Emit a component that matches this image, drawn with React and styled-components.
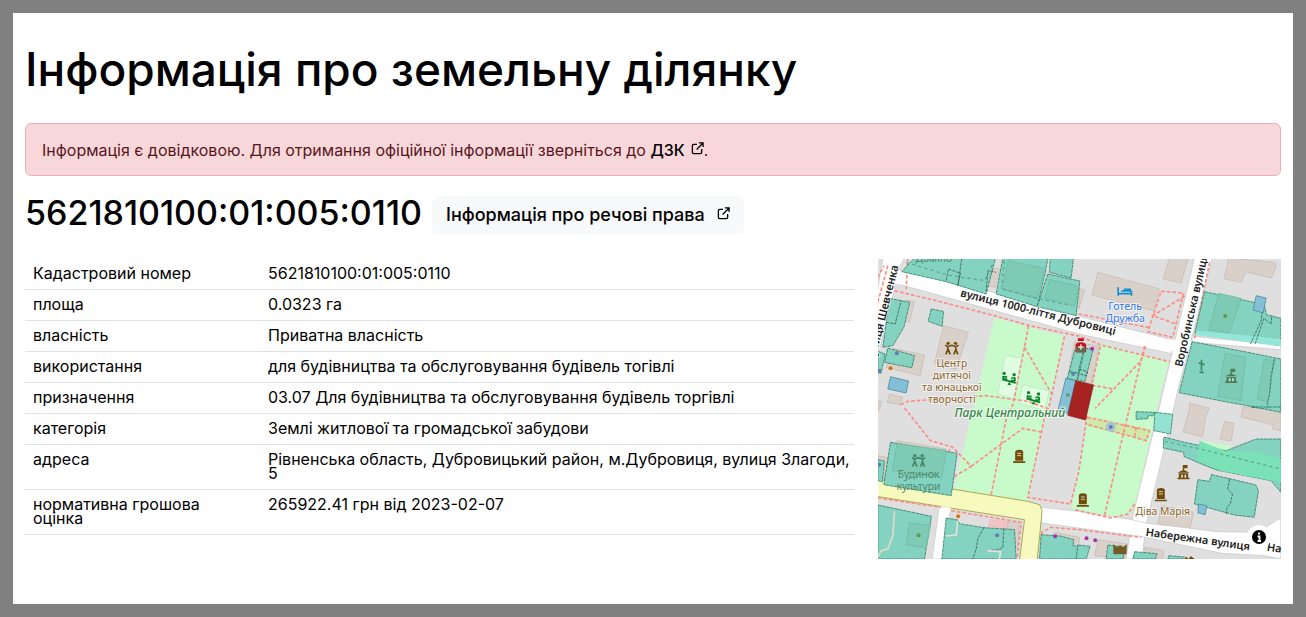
import React from "react";
import styled, { createGlobalStyle } from "styled-components";

const GlobalStyle = createGlobalStyle`
  *, *::before, *::after {
    box-sizing: border-box;
  }

  body {
    margin: 0;
    background: #808080;
    color: #000;
    font-family: Inter, "Liberation Sans", sans-serif;
    font-size: 16px;
    line-height: 24px;
  }
`;

const Page = styled.div`
  display: flex;
  min-height: 100vh;
  padding: 13px;
`;

const Container = styled.main`
  flex: 1;
  min-width: 0;
  padding: 28px 12px;
  background: #fff;
`;

const Title = styled.h1`
  margin: 0 0 26px;
  font-size: 46px;
  font-weight: 500;
  line-height: 56px;
`;

const Alert = styled.div`
  margin-bottom: 16px;
  padding: 15px 16px 13px;
  border: 1px solid #f1aeb5;
  border-radius: 6px;
  background: #f8d7da;
  color: #58151c;
  line-height: 23px;
`;

const AlertLink = styled.a`
  color: #000;
  font-weight: 500;
  text-decoration: none;
`;

const LinkIcon = styled.svg`
  width: 13px;
  height: 13px;
  margin-left: ${(props) => (props.$wide ? "12px" : "6px")};
  vertical-align: 1px;
  fill: none;
  stroke: currentColor;
  stroke-width: 1.4;
`;

const Heading = styled.div`
  display: flex;
  flex-wrap: wrap;
  align-items: flex-end;
  gap: 10px;
  margin-bottom: 25px;
`;

const Number = styled.h2`
  margin: 0;
  font-size: 34px;
  font-weight: 500;
  line-height: 42px;
`;

const RightsLink = styled.a`
  padding: 7px 14px;
  border-radius: 6px;
  background: #f8f9fa;
  color: #000;
  font-size: 18px;
  font-weight: 500;
  text-decoration: none;
`;

const Columns = styled.div`
  display: flex;
  margin: 0 -12px;
`;

const Column = styled.div`
  width: calc(100% * ${(props) => props.$share} / 12);
  padding: 0 12px;
`;

const Table = styled.table`
  width: 100%;
  border-collapse: collapse;
  table-layout: fixed;
  line-height: 14px;
`;

const Label = styled.th`
  width: 235px;
  padding: 7px 8px 9px;
  border-bottom: 1px solid #dee2e6;
  font-weight: 400;
  text-align: left;
  vertical-align: top;
`;

const Value = styled.td`
  padding: 7px 0 9px 8px;
  border-bottom: 1px solid #dee2e6;
  vertical-align: top;
`;

const MapBox = styled.div`
  position: relative;
  height: 300px;
  overflow: hidden;
  background: #dfdfdf;
`;

const MapSvg = styled.svg`
  display: block;
  width: 100%;
  height: 100%;
  font-family: "Noto Sans", sans-serif;

  .building {
    fill: #d9d0c9;
    stroke: #c6b8ad;
    stroke-width: 2;
  }
  .park {
    fill: #c8facc;
  }
  .road {
    fill: #fff;
    stroke: #c4c4c4;
    stroke-width: 2;
  }
  .path {
    fill: none;
    stroke: #fa8d86;
    stroke-width: 5;
    stroke-dasharray: 11 6;
  }
  .parcel {
    fill: #83d3c0;
    stroke: #17694f;
    stroke-width: 2;
    stroke-dasharray: 11 2;
  }
  .line {
    fill: none;
    stroke: #24473d;
    stroke-width: 2;
    stroke-dasharray: 9 3;
  }
  .blue {
    fill: #83bfd6;
    stroke: #397c94;
    stroke-width: 2;
  }
  .inner {
    fill: #7fcab5;
    stroke: #6db7a0;
    stroke-width: 2;
  }
  .halo {
    paint-order: stroke;
    stroke: #ffffffaa;
    stroke-width: 6;
    stroke-linejoin: round;
  }
`;

const InfoButton = styled.button`
  position: absolute;
  right: 10px;
  bottom: 10px;
  display: flex;
  align-items: center;
  justify-content: center;
  width: 24px;
  height: 24px;
  padding: 0;
  border: 0;
  border-radius: 12px;
  background: #fff;
`;

const rows = [
  ["Кадастровий номер", "5621810100:01:005:0110"],
  ["площа", "0.0323 га"],
  ["власність", "Приватна власність"],
  ["використання", "для будівництва та обслуговування будівель тогівлі"],
  ["призначення", "03.07 Для будівництва та обслуговування будівель торгівлі"],
  ["категорія", "Землі житлової та громадської забудови"],
  ["адреса", "Рівненська область, Дубровицький район, м.Дубровиця, вулиця Злагоди, 5"],
  ["нормативна грошова оцінка", "265922.41 грн від 2023-02-07"],
];

const buildings = [
  "198,200 272,220 235,332 170,312",
  "85,122 110,128 95,190 70,180",
  "45,268 140,288 127,350 25,325",
  "35,405 75,415 67,438 28,430",
  "0,425 12,428 0,460",
  "335,25 365,30 352,85 325,80",
  "660,40 845,90 827,155 642,108",
  "875,-3 932,-3 910,72 856,60",
  "1053,-3 1192,10 1195,25 1180,57 1102,38 1092,70 1038,60",
  "603,87 620,95 603,150",
  "935,432 994,447 985,470 974,534 916,519 936,445",
  "1040,487 1069,493 1060,546 1027,541",
  "1095,444 1209,444 1209,515 1185,510 1185,497 1090,474",
  "850,739 947,760 935,817 841,794",
  "800,865 858,875 855,900 795,900",
  "660,842 750,855 740,900 650,890",
  "390,790 425,790 418,870 388,850",
  "530,820 605,835 603,860 520,840",
  "590,248 664,262 640,375 570,358",
  "0,590 30,596 20,680 0,675",
  "58,545 205,570 200,600 55,570",
];

const roads = [
  "15,-3 80,-3 60,32 50,90 0,290 0,90",
  "60,32 245,72 603,172 883,242 883,284 603,225 50,72",
  "950,-3 1003,-3 943,232 903,380 888,447 803,805 793,900 745,900 763,779 843,450",
  "943,232 1209,258 1209,272 943,250",
  "185,735 220,740 195,900 163,900",
  "490,745 603,757 763,782 803,792 1020,818 1140,820 1209,776 1209,900 1160,890 1033,883 793,833 603,807 490,792",
];

const parcels = [
  "110,-3 353,-3 325,105 205,68 72,38",
  "375,-3 510,-3 502,44 478,143 355,105",
  "517,-3 587,-3 580,57 515,40",
  "510,45 606,66 595,170 478,143",
  "35,118 96,130 78,205 45,260 15,265",
  "160,150 197,157 193,202 151,187",
  "30,267 110,290 102,326 20,310",
  "0,277 22,285 10,342 0,342",
  "38,550 238,583 220,710 18,677",
  "0,602 20,606 14,668 0,665",
  "0,738 161,772 140,900 0,900",
  "205,777 240,783 245,794 318,806 410,812 415,900 192,900",
  "490,827 548,831 588,842 585,860 606,864 606,900 485,900",
  "600,858 637,862 625,900 595,900",
  "690,858 743,865 735,900 685,900",
  "770,878 838,884 833,900 765,900",
  "873,890 920,894 914,900 870,900",
  "980,98 1128,130 1160,140 1166,167 1209,178 1209,260 951,223",
  "943,248 1110,280 1209,300 1209,444 1168,450 1052,430 904,401",
  "775,458 830,460 825,471 812,469 810,479 775,481",
  "858,534 920,550 1045,575 1135,540 1209,540 1209,700 1180,665 1020,634 975,617 918,592 918,580 856,567",
  "1001,647 1060,660 1134,678 1142,695 1129,775 1070,768 950,735 960,662 995,667",
  "1120,444 1209,444 1209,460 1160,450",
];

const paths = [
  "50,95 175,125 350,170 455,200 606,232 670,258 875,308",
  "90,-3 85,90",
  "30,20 0,130",
  "452,200 440,265 405,437 387,470 340,707",
  "440,265 525,410",
  "560,232 515,437 503,460 450,715 578,735 603,637 628,467",
  "68,437 90,427 325,410 450,427 540,460",
  "80,447 158,545 222,563 280,622 210,665 215,570",
  "280,622 435,508 495,520",
  "803,262 790,305 652,448",
  "800,262 735,530 680,770",
  "668,262 642,378 705,390",
  "603,165 820,207",
  "850,97 917,102 885,235 810,218 850,97",
  "920,112 825,170 895,195",
  "995,10 950,240",
  "628,475 815,515 805,545 625,495",
  "775,505 770,535",
  "0,717 190,745",
  "220,755 430,790 418,900",
  "490,860 492,820 520,805 603,812 790,835",
  "770,735 750,765 700,777 590,752",
  "0,55 18,20",
];

const dots = [
  ["#6579b4", 57, 283],
  ["#6579b4", 4, 335],
  ["#cf7414", 38, 328],
  ["#6579b4", 586, 345],
  ["#6579b4", 4, 617],
  ["#cf7414", 241, 772],
  ["#6579b4", 358, 829],
  ["#63984e", 122, 829],
  ["#639648", 1042, 171],
  ["#a731ae", 532, 832],
  ["#a731ae", 626, 838],
  ["#a731ae", 652, 844],
  ["#a731ae", 643, 269],
  ["#639e80", 570, 408],
];

// two standing figures
const People = ({ x, y, color }) => (
  <g transform={`translate(${x} ${y})`} fill="none" stroke={color} strokeWidth="5">
    <circle cx="-11" cy="-15" r="5" fill={color} stroke="none" />
    <circle cx="11" cy="-15" r="5" fill={color} stroke="none" />
    <path d="M-20-9 L-12-5 0-9 12-5 20-9 M-12-6 V4 L-18 18 M-11 3 L-5 18 M12-6 V4 L6 18 M12 3 L18 18" />
  </g>
);

const Monument = ({ x, y }) => (
  <g transform={`translate(${x} ${y})`} fill="#734a08">
    <path d="M-12 13 V-13 Q-11-20 0-20 Q12-20 12-13 V13z M-18 15 H18 V20 H-18z" />
    <path d="M-6-9 H6 M-6-2 H6" stroke="#d5d5b4" strokeWidth="3" />
  </g>
);

const Townhall = ({ x, y, color }) => (
  <g transform={`translate(${x} ${y})`} fill={color}>
    <path d="M-2-22 H12 V-12 H2 V-7 L18 1 H-18 L-2-7z M-14 3 H14 V16 H18 V21 H-18 V16 H-14z" />
    <path d="M-7 7 V16 H-2 V7z M3 7 V16 H8 V7z" fill="#dfdfdf" />
  </g>
);

// children on a seesaw
const Playground = ({ x, y }) => (
  <g transform={`translate(${x} ${y})`} fill="none" stroke="#078328" strokeWidth="5">
    <circle cx="-15" cy="-12" r="5" fill="#078328" stroke="none" />
    <circle cx="15" cy="-8" r="5" fill="#078328" stroke="none" />
    <path d="M-18-4 V5 H-8 V11 M-16-2 L-6-1 M17 0 V10 H7 V15 M16 2 L6 2 M-21 6 L20 17" />
    <path d="M-5 23 L0 13 6 23z" fill="#078328" stroke="none" />
  </g>
);

const CadastreMap = () => (
  <MapSvg viewBox="0 0 1209 900" preserveAspectRatio="xMidYMid slice" role="img" aria-label="Карта ділянки">
    <polygon className="park" points="350,175 562,232 515,437 503,467 450,727 228,690 285,450" />
    <polygon className="park" points="665,252 873,307 838,450 773,737 755,765 720,778 580,752 600,637 628,467" />
    <polygon className="park" points="972,545 1060,560 1055,585 960,570" />
    <polygon points="335,780 395,785 390,810 328,805" fill="#f0c4c4" />
    <g fill="#e0fce1" stroke="#b7e6b9" strokeWidth="2">
      <polygon points="382,289 432,297 410,420 360,405" />
      <polygon points="435,378 515,395 500,455 422,432" />
    </g>
    <polygon points="632,472 815,510 808,545 627,500" fill="#cfe9a8" />
    {buildings.map((points) => (
      <polygon key={points} className="building" points={points} />
    ))}
    {roads.map((points) => (
      <polygon key={points} className="road" points={points} />
    ))}
    <g fill="#fff">
      <polygon points="845,240 940,245 930,285 835,265" />
      <polygon points="768,785 800,795 790,829 758,822" />
      <polygon points="62,35 100,45 90,78 50,75" />
    </g>
    <polygon
      points="-5,660 222,690 450,727 485,737 493,755 478,905 425,905 440,782 -5,712"
      fill="#f7fabf"
      stroke="#a9ab4d"
      strokeWidth="3"
    />
    <polygon points="188,741 219,746 217,760 185,755" fill="#fff" />
    {paths.map((points) => (
      <polyline key={points} className="path" points={points} />
    ))}
    {parcels.map((points) => (
      <polygon key={points} className="parcel" points={points} />
    ))}
    <g className="inner">
      <polygon points="392,5 500,28 478,120 372,90" />
      <polygon points="515,62 603,82 590,140 500,118" />
      <polygon points="58,554 205,574 192,655 43,635" />
      <polygon points="95,790 158,800 145,868 85,857" />
      <polygon points="1023,103 1090,118 1055,222 993,212" />
      <polygon points="1042,283 1103,295 1090,425 1020,412" />
      <polygon points="1160,300 1190,305 1170,430 1138,420" />
    </g>
    <polygon points="958,215 1209,240 1209,262 951,228" fill="#94e7d8" />
    <polygon points="965,545 1040,575 1140,580 1209,600 1209,670 1030,636 960,605" fill="#7be2b8" />
    <polygon className="parcel" points="831,460 885,466 878,525 828,515" style={{ fill: "#94e3d2" }} />
    <g className="line">
      <polyline points="205,65 212,30 248,43 240,80 M240,80 250,-3" />
      <polyline points="240,80 252,-3" />
      <polyline points="325,98 330,35 355,40" />
      <polyline points="25,190 52,195 70,125" />
      <polyline points="318,806 300,840 295,870 285,900" />
      <polyline points="378,808 375,865 362,872 328,875" />
      <polyline points="1118,255 1150,185 1155,145" />
      <polyline points="1132,255 1158,178 1180,195 1182,170" />
      <polyline points="1190,300 1180,350 1175,410 1168,430 1172,445" />
      <polyline points="1055,660 1050,690 1064,705 1058,733 1048,745 1045,765" />
    </g>
    <g fill="none" stroke="#61aa95" strokeWidth="4" strokeDasharray="10 9">
      <polyline points="85,10 210,48 320,65 345,15" />
      <polyline points="375,90 480,118 580,140" />
      <polyline points="380,5 372,85" />
      <polyline points="860,547 960,568 1209,630" />
    </g>
    <polyline points="50,757 45,830 30,870 10,875 0,895" fill="none" stroke="#e6d6ce" strokeWidth="5" />
    <polyline points="240,785 235,828 205,831" fill="none" stroke="#e6e0da" strokeWidth="5" />
    <polyline points="328,875 368,878 365,900" fill="none" stroke="#eee0dc" strokeWidth="5" />
    <polygon className="blue" points="38,353 92,366 85,402 30,390" />
    <polygon className="blue" points="1135,110 1165,117 1156,162 1126,153" />
    <polygon className="blue" points="962,735 987,740 982,767 960,762" />
    <polygon className="parcel" points="591,273 616,278 601,343 574,338" />
    <polygon className="parcel" points="621,268 646,271 621,368 599,363" />
    <polygon className="parcel" points="574,338 602,343 597,366 568,358" />
    <polyline className="line" points="604,331 629,338 626,350 601,344" />
    <polygon className="blue" points="564,358 594,365 570,463 540,455" />
    <polygon points="594,365 647,378 623,483 570,469" fill="#a62321" stroke="#861b18" strokeWidth="2" />
    {dots.map(([color, cx, cy]) => (
      <circle key={`${cx}-${cy}`} cx={cx} cy={cy} r="6" fill={color} />
    ))}
    <circle cx="699" cy="504" r="15" fill="#a4c6cd" />
    <circle cx="699" cy="504" r="6" fill="#617ac2" />

    <People x={222} y={268} color="#734a08" />
    <People x={122} y={605} color="#468568" />
    <Playground x={394} y={355} />
    <Playground x={467} y={413} />
    <Monument x={424} y={592} />
    <Monument x={615} y={723} />
    <Monument x={849} y={707} />
    <Townhall x={917} y={640} color="#734a08" />
    <Townhall x={1060} y={351} color="#48805a" />
    <path d="M721 85 V110 M723 104 H763 M761 95 V110 M730 96 H757 V91 H738" fill="none" stroke="#0f8fcf" strokeWidth="5" />
    <path d="M971 302 V335 M963 312 L980 317 M965 340 H978" fill="none" stroke="#358967" strokeWidth="5" />
    <path d="M600 238 H618 V246 H600z M593 279 V258 Q595 250 609 250 Q623 250 625 258 V279z" fill="#c4101a" />
    <path d="M595 263 H623 V281 H595z" fill="#6c6650" />
    <path d="M609 256 V272 M601 264 H617" stroke="#d9e6dd" strokeWidth="4" />
    <path d="M679 842 L692 851 700 844 708 851 720 842 719 872 H680z" transform="translate(27 14)" fill="#735b27" />
    <path d="M919 900 L925 893 932 900 939 891 950 900z" fill="#734a08" />

    <g className="halo" fill="#222" fontSize="33" fontWeight="600">
      <text transform="translate(246 112) rotate(14)">вулиця 1000-ліття Дубровиці</text>
      <text transform="translate(913 325) rotate(-77)">Воробинська вулиця</text>
      <text transform="translate(-10 310) rotate(-76)">вулиця Шевченка</text>
      <text transform="translate(802 830) rotate(8)">Набережна вулиця</text>
      <text transform="translate(1166 875) rotate(8)">Набережна</text>
    </g>
    <g className="halo" fill="#8b6629" fontSize="31" textAnchor="middle">
      <text x="222" y="325">Центр</text>
      <text x="222" y="361">дитячої</text>
      <text x="222" y="397">та юнацької</text>
      <text x="222" y="433">творчості</text>
      <text x="855" y="769">Діва Марія</text>
    </g>
    <g fill="#4e8769" fontSize="31" textAnchor="middle">
      <text x="122" y="656">Будинок</text>
      <text x="122" y="692">культури</text>
      <text x="168" y="8">Доміно</text>
    </g>
    <g className="halo" fill="#3675e8" fontSize="32" textAnchor="middle">
      <text x="742" y="153">Готель</text>
      <text x="742" y="190">Дружба</text>
    </g>
    <text className="halo" x="230" y="475" fill="#368449" fontSize="36" fontStyle="italic" fontWeight="500">
      Парк Центральний
    </text>
  </MapSvg>
);

const ExternalIcon = ({ wide }) => (
  <LinkIcon viewBox="0 0 14 14" $wide={wide} aria-hidden="true">
    <path d="M6.5 2.5 H3 Q1.5 2.5 1.5 4 V11 Q1.5 12.5 3 12.5 H10 Q11.5 12.5 11.5 11 V7.5 M8.5 1 H13 V5.5 M13 1 L6 8" />
  </LinkIcon>
);

const App = () => {
  return (
    <Page>
      <GlobalStyle />
      <Container>
        <Title>Інформація про земельну ділянку</Title>
        <Alert>
          Інформація є довідковою. Для отримання офіційної інформації зверніться до{" "}
          <AlertLink href="#dzk">
            ДЗК
            <ExternalIcon />
          </AlertLink>
          .
        </Alert>
        <Heading>
          <Number>5621810100:01:005:0110</Number>
          <RightsLink href="#rights">
            Інформація про речові права
            <ExternalIcon wide />
          </RightsLink>
        </Heading>
        <Columns>
          <Column $share={8}>
            <Table>
              <tbody>
                {rows.map(([label, value]) => (
                  <tr key={label}>
                    <Label scope="row">{label}</Label>
                    <Value>{value}</Value>
                  </tr>
                ))}
              </tbody>
            </Table>
          </Column>
          <Column $share={4}>
            <MapBox>
              <CadastreMap />
              <InfoButton type="button" aria-label="Про карту">
                <svg width="14" height="14" viewBox="0 0 14 14" aria-hidden="true">
                  <circle cx="7" cy="7" r="7" />
                  <path d="M7 2.5 v2 M5.5 6.5 H7.5 V11 M5.5 11 H9" fill="none" stroke="#fff" strokeWidth="1.8" />
                </svg>
              </InfoButton>
            </MapBox>
          </Column>
        </Columns>
      </Container>
    </Page>
  );
};

export default App;
